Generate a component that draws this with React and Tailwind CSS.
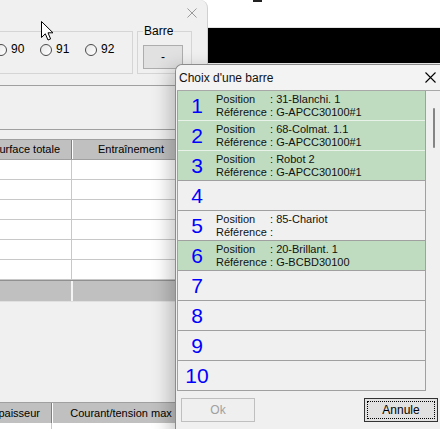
import React from "react";

const barres = [
  { n: 1, pos: "31-Blanchi. 1", ref: "G-APCC30100#1", green: true },
  { n: 2, pos: "68-Colmat. 1.1", ref: "G-APCC30100#1", green: true },
  { n: 3, pos: "Robot 2", ref: "G-APCC30100#1", green: true },
  { n: 4 },
  { n: 5, pos: "85-Chariot", ref: "" },
  { n: 6, pos: "20-Brillant. 1", ref: "G-BCBD30100", green: true },
  { n: 7 },
  { n: 8 },
  { n: 9 },
  { n: 10 },
];

function CloseIcon({ color = "#000", size = 11 }) {
  return (
    <svg width={size} height={size} viewBox="0 0 11 11">
      <path d="M0.5 0.5 L10.5 10.5 M10.5 0.5 L0.5 10.5" stroke={color} strokeWidth="1.1" fill="none" />
    </svg>
  );
}

function Radio({ label }) {
  return (
    <div className="flex items-center gap-[4px] w-[45px] shrink-0">
      <span className="w-[12px] h-[12px] rounded-full border border-[#4a4a4a] bg-gradient-to-br from-[#e6e6e6] to-white shrink-0" />
      <span className="text-[12px] leading-[13px]">{label}</span>
    </div>
  );
}

function Cursor() {
  return (
    <svg width="13" height="20" viewBox="0 0 13 20" className="absolute left-[41px] top-[21px]">
      <path d="M0.5 0.5 L0.5 16.5 L4.3 12.8 L7 19 L9.6 17.9 L7 11.8 L12 11.8 Z" fill="#fff" stroke="#000" strokeWidth="1" strokeLinejoin="round" />
    </svg>
  );
}

function BarreRow({ b, next }) {
  const sep = b.green && next && next.green ? "border-[#e8f2e8]" : "border-[#a0a0a0]";
  return (
    <div className={`flex h-[30px] border-b ${sep} ${b.green ? "bg-[#c0dcc0]" : "bg-[#f0f0f0]"}`}>
      <div className="w-[38px] shrink-0 flex items-center justify-center text-[21px] leading-none text-[#0000ff]">
        {b.n}
      </div>
      {b.pos !== undefined && (
        <div className="pt-[2px] text-[11px] leading-[13px] text-[#111]">
          <div className="flex">
            <span className="w-[54px]">Position</span>
            <span>: {b.pos}</span>
          </div>
          <div className="flex">
            <span className="w-[54px]">Référence</span>
            <span>: {b.ref}</span>
          </div>
        </div>
      )}
    </div>
  );
}

export default function App() {
  return (
    <div className="relative w-[440px] h-[429px] overflow-hidden bg-white font-['Liberation_Sans',Arial,sans-serif] text-black">
      <div className="flex h-full">
        {/* fenêtre de fond */}
        <div className="w-[208px] shrink-0 h-full bg-[#f0f0f0] rounded-tr-[8px] border-r border-[#d0d0d0] flex flex-col">
          <div className="h-[26px] flex items-center justify-end pr-[10px]">
            <CloseIcon color="#9a9a9a" size={10} />
          </div>
          <div className="flex mt-[5px] h-[43px]">
            <div className="ml-[-11px] w-[144px] h-full border border-[#d5d5d5] flex pl-[5px] pt-[11px]">
              <div className="flex h-[13px]">
                <Radio label="90" />
                <Radio label="91" />
                <Radio label="92" />
              </div>
            </div>
            <div className="relative ml-[4px] w-[55px] h-full border border-[#d5d5d5] pl-[5px] pt-[13px]">
              <span className="absolute left-[5px] top-[-8px] bg-[#f0f0f0] px-[1px] text-[12px] leading-[14px]">Barre</span>
              <div className="w-[40px] h-[24px] border border-[#adadad] bg-[#e1e1e1] flex items-center justify-center text-[12px]">
                -
              </div>
            </div>
          </div>
          <div className="mt-[11px] border-t border-[#a0a0a0] h-[44px]" />
          <div className="border-t border-[#a0a0a0] h-[10px]" />
          {/* tableau */}
          <div className="flex h-[21px] border-t border-[#a0a0a0] bg-[#c0c0c0] text-[11px] border-b border-b-[#a0a0a0]">
            <div className="w-[72px] shrink-0 border-r border-[#808080] flex items-center justify-end pr-[11px] whitespace-nowrap overflow-visible">
              <span className="shrink-0">Surface totale</span>
            </div>
            <div className="w-[117px] shrink-0 border-l border-white flex items-center justify-center">Entraînement</div>
            <div className="flex-1 border-l border-[#808080]" />
          </div>
          {[0, 1, 2, 3, 4, 5].map((i) => (
            <div key={i} className="flex h-[20px] bg-white border-b border-[#c8c8c8]">
              <div className="w-[72px] shrink-0 border-r border-[#c8c8c8]" />
              <div className="flex-1" />
            </div>
          ))}
          <div className="flex h-[21px] bg-[#c0c0c0] border-t border-[#909090]">
            <div className="w-[73px] shrink-0 border-r-2 border-[#f4f4f4]" />
            <div className="flex-1" />
          </div>
          <div className="h-[101px] border-t border-[#e0e0e0]" />
          <div className="flex h-[21px] border-t border-[#a0a0a0] bg-[#c0c0c0] text-[11px]">
            <div className="w-[52px] shrink-0 border-r border-[#808080] flex items-center justify-end pr-[11px] whitespace-nowrap">
              <span className="shrink-0">Epaisseur</span>
            </div>
            <div className="w-[137px] shrink-0 border-l border-white flex items-center justify-center whitespace-nowrap">
              Courant/tension max
            </div>
          </div>
          <div className="flex flex-1 bg-white">
            <div className="w-[52px] shrink-0 border-r border-[#c8c8c8]" />
          </div>
        </div>
        {/* fenêtre à droite */}
        <div className="flex-1 flex flex-col">
          <div className="h-[28px] bg-white border-b border-[#e4e4e4]">
            <div className="ml-[45px] w-[9px] h-[2px] bg-[#222]" />
          </div>
          <div className="h-[35px] bg-black" />
          <div className="flex-1 bg-[#f0f0f0]" />
        </div>
      </div>

      <Cursor />

      {/* Choix d'une barre */}
      <div className="absolute left-[175px] top-[64px] w-[267px] h-[370px] bg-[#f0f0f0] rounded-tl-[7px] border-l border-t border-[#8c8c8c] shadow-[-6px_4px_18px_rgba(0,0,0,0.22)] flex flex-col">
        <div className="h-[25px] flex items-center justify-between pl-[3px] pr-[6px] bg-[#f3f3f3] rounded-tl-[7px]">
          <span className="text-[12px] text-[#111]">Choix d'une barre</span>
          <CloseIcon />
        </div>
        <div className="flex border-t border-[#a8a8a8] ml-[1px]">
          <div className="w-[249px] shrink-0 border-l border-r border-[#a0a0a0]">
            {barres.map((b, i) => (
              <BarreRow key={b.n} b={b} next={barres[i + 1]} />
            ))}
          </div>
          <div className="flex-1 bg-[#f0f0f0] pt-[17px] pl-[7px]">
            <div className="w-[2px] h-[40px] rounded-full bg-[#858585]" />
          </div>
        </div>
        <div className="flex justify-between pl-[5px] pr-[4px] pt-[7px] rounded-tl-[6px]">
          <div className="w-[74px] h-[24px] border border-[#bfbfbf] bg-[#efefef] flex items-center justify-center text-[12px] text-[#a0a0a0]">
            Ok
          </div>
          <div className="w-[74px] h-[24px] border border-[#333] bg-[#e1e1e1] p-[2px]">
            <div className="w-full h-full border border-dotted border-black flex items-center justify-center text-[12px]">
              Annule
            </div>
          </div>
        </div>
      </div>
    </div>
  );
}
